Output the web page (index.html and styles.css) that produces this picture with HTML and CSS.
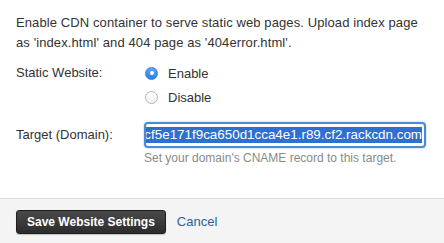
FILE: index.html
```html
<!DOCTYPE html>
<html lang="en">
  <head>
    <meta charset="UTF-8" />
    <title>Static Website</title>
    <link rel="stylesheet" href="styles.css">
  </head>
  <body>
    <div class="panel">
      <p class="intro">Enable CDN container to serve static web pages. Upload index page as 'index.html' and 404 page as '404error.html'.</p>
      <div class="form-row">
        <div class="form-label">Static Website:</div>
        <div class="form-field">
          <label class="radio"><span class="radio-dot -checked"></span>Enable</label>
          <label class="radio"><span class="radio-dot"></span>Disable</label>
        </div>
      </div>
      <div class="form-row -target">
        <div class="form-label">Target (Domain):</div>
        <div class="form-field">
          <div class="text-input"><span class="selection">ecf5e171f9ca650d1cca4e1.r89.cf2.rackcdn.com</span></div>
          <div class="help">Set your domain's CNAME record to this target.</div>
        </div>
      </div>
    </div>
    <div class="footer">
      <button class="btn-save" type="button">Save Website Settings</button>
      <a class="cancel" href="#cancel">Cancel</a>
    </div>
  </body>
</html>
```

FILE: styles.css
```css
* {
  margin: 0;
  padding: 0;
  box-sizing: border-box;
}

body {
  font-family: "Liberation Sans", Helvetica, Arial, sans-serif;
  font-size: 13px;
  color: #333;
  background-color: #fff;
}

.panel {
  padding: 13px 16px 0;
  height: 198px;
}

.intro {
  line-height: 20px;
  letter-spacing: 0.1px;
}

.form-row {
  display: flex;
  margin-top: 8px;
}

.form-row.-target {
  margin-top: 13px;
}

.form-label {
  width: 128px;
  line-height: 24px;
}

.form-row.-target .form-label {
  line-height: 26px;
}

.form-field {
  flex: 1;
}

.radio {
  display: flex;
  align-items: center;
  height: 24px;
  padding-left: 1px;
}

.radio-dot {
  display: block;
  width: 13px;
  height: 13px;
  margin-right: 10px;
  border: 1px solid #b5b5b5;
  border-radius: 50%;
  background: linear-gradient(#fff, #f2f2f2);
}

.radio-dot.-checked {
  position: relative;
  border-color: #2f7fdc;
  background: linear-gradient(#5fa6f2, #2b7fe0);
}

.radio-dot.-checked::after {
  content: "";
  position: absolute;
  top: 3.5px;
  left: 3.5px;
  width: 4px;
  height: 4px;
  border-radius: 50%;
  background-color: #fff;
}

.text-input {
  display: flex;
  justify-content: flex-end;
  align-items: center;
  overflow: hidden;
  width: 282px;
  height: 26px;
  padding: 0 2px;
  border: 2px solid #4a8ad9;
  border-radius: 4px;
  box-shadow: 0 0 2px #8fb8ea;
  white-space: nowrap;
}

.selection {
  font-size: 13.4px;
  line-height: 16px;
  color: #fff;
  background-color: #2f6fcf;
}

.help {
  margin-top: 2px;
  font-size: 12px;
  line-height: 16px;
  color: #8a8a8a;
}

.footer {
  display: flex;
  align-items: center;
  height: 45px;
  padding: 11px 16px 10px;
  border-top: 1px solid #dcdcdc;
  background-color: #f4f4f4;
}

.btn-save {
  height: 24px;
  padding: 0 10px;
  border: 1px solid #1e1e1e;
  border-radius: 3px;
  font-family: inherit;
  font-size: 12px;
  font-weight: bold;
  color: #fff;
  background: linear-gradient(#4a4a4a, #2c2c2c);
  box-shadow: 0 1px 1px rgba(0, 0, 0, 0.2);
}

.cancel {
  margin-left: 11px;
  font-size: 13px;
  color: #2c5f9f;
  text-decoration: none;
}
```
